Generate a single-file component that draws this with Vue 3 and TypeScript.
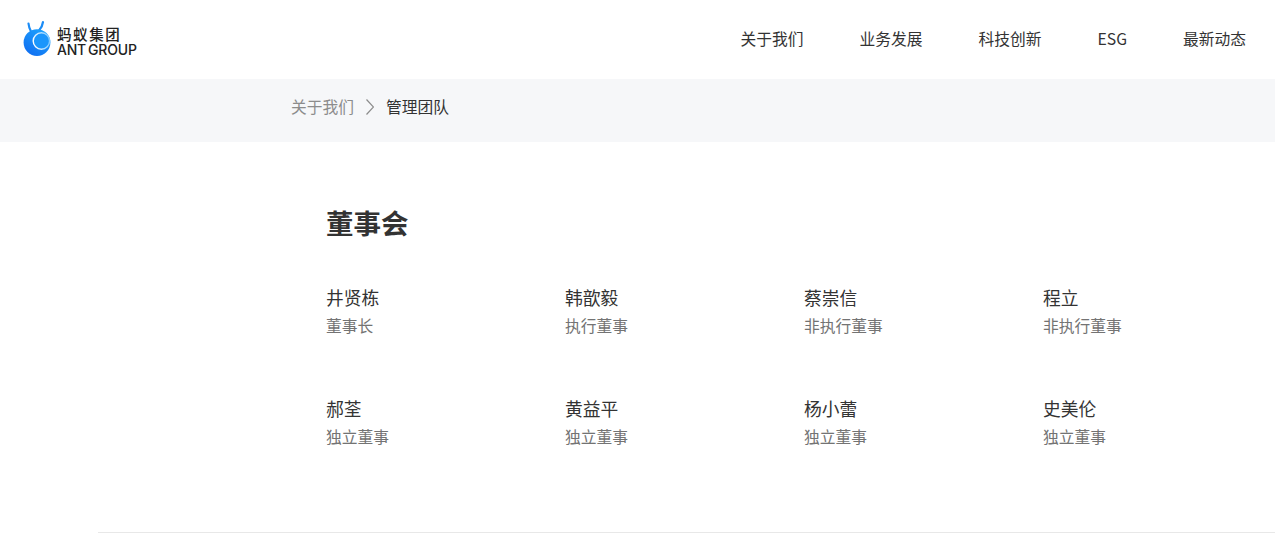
<template>
  <div class="page">
    <header class="header">
      <a class="logo" href="#" aria-label="蚂蚁集团">
        <svg class="logo__mark" width="28" height="36" viewBox="0 0 28 36" aria-hidden="true">
          <defs>
            <linearGradient id="antBody" x1="0.15" y1="1" x2="0.85" y2="0">
              <stop offset="0" stop-color="#0f6cf0" />
              <stop offset="1" stop-color="#1ea6ff" />
            </linearGradient>
            <linearGradient id="antRing" x1="0" y1="0.6" x2="1" y2="0.4">
              <stop offset="0" stop-color="#ffffff" />
              <stop offset="1" stop-color="#7cc8ff" />
            </linearGradient>
          </defs>
          <path d="M5.5 3.5C5.8 6.5 6.6 9 8 11.5" stroke="#1b8cf6" stroke-width="2.2" fill="none" stroke-linecap="round" />
          <path d="M20 2C19.6 5 18.4 8 16 10.5" stroke="#1b8cf6" stroke-width="2.2" fill="none" stroke-linecap="round" />
          <circle cx="14" cy="22.6" r="13.4" fill="url(#antBody)" />
          <circle cx="18.4" cy="21" r="8.2" fill="#1a96fc" stroke="url(#antRing)" stroke-width="1.4" />
        </svg>
        <span class="logo__text">
          <span class="logo__cn">蚂蚁集团</span>
          <span class="logo__en">ANT GROUP</span>
        </span>
      </a>
      <nav class="nav">
        <a v-for="item in navItems" :key="item" class="nav__item" href="#">{{ item }}</a>
      </nav>
    </header>

    <div class="crumbs">
      <a class="crumbs__link" href="#">关于我们</a>
      <svg class="crumbs__sep" width="8" height="16" viewBox="0 0 8 16" aria-hidden="true">
        <path d="M.5 .5l7 7.5-7 7.5" fill="none" stroke="#8c8c8c" stroke-width="1.2" />
      </svg>
      <span class="crumbs__current">管理团队</span>
    </div>

    <main class="board">
      <h1 class="board__title">董事会</h1>
      <ul class="board__grid" role="list">
        <li v-for="m in members" :key="m.name" class="member">
          <span class="member__name">{{ m.name }}</span>
          <span class="member__role">{{ m.role }}</span>
        </li>
      </ul>
    </main>

    <div class="rule" />
  </div>
</template>

<script setup lang="ts">
const navItems = ['关于我们', '业务发展', '科技创新', 'ESG', '最新动态']

const members = [
  { name: '井贤栋', role: '董事长' },
  { name: '韩歆毅', role: '执行董事' },
  { name: '蔡崇信', role: '非执行董事' },
  { name: '程立', role: '非执行董事' },
  { name: '郝荃', role: '独立董事' },
  { name: '黄益平', role: '独立董事' },
  { name: '杨小蕾', role: '独立董事' },
  { name: '史美伦', role: '独立董事' },
]
</script>

<style scoped>
.page {
  height: 545px;
  overflow: hidden;
  background: #fff;
  font-family: 'Noto Sans CJK SC', 'Noto Sans', sans-serif;
  color: #333;
}

.header {
  height: 79px;
  box-sizing: border-box;
  display: flex;
  align-items: center;
  justify-content: space-between;
  padding: 0 29px 3px 23px;
}

.logo {
  display: flex;
  align-items: flex-end;
  gap: 6px;
  text-decoration: none;
  color: #222;
}

.logo__text { display: flex; flex-direction: column; }
.logo__cn { font-size: 14.5px; line-height: 15px; font-weight: 500; letter-spacing: 1.6px; margin-bottom: 2px; }
.logo__en { font-family: Inter, 'Liberation Sans', sans-serif; font-size: 14px; line-height: 13px; font-weight: 500; letter-spacing: -0.2px; word-spacing: -1.5px; white-space: nowrap; }

.nav { display: flex; gap: 56px; margin-top: 2px; }
.nav__item { font-size: 15.75px; line-height: 24px; color: #333; text-decoration: none; }

.crumbs {
  height: 63px;
  box-sizing: border-box;
  display: flex;
  align-items: center;
  padding: 0 0 8px 291px;
  background: #f6f7f9;
  font-size: 15.75px;
}

.crumbs__link { color: #8c8c8c; text-decoration: none; }
.crumbs__sep { margin: 0 12px; }
.crumbs__current { color: #333; }

.board { padding: 59px 0 0 326px; }

.board__title {
  margin: 0 0 41px;
  font-size: 27.5px;
  line-height: 42px;
  font-weight: 700;
  color: #333;
}

.board__grid {
  list-style: none;
  margin: 0;
  padding: 0;
  display: grid;
  grid-template-columns: repeat(4, 239px);
  row-gap: 47px;
}

.member { display: flex; flex-direction: column; gap: 3px; height: 64px; }
.member__name { font-size: 17.75px; line-height: 27px; color: #333; }
.member__role { font-size: 15.75px; line-height: 24px; color: #737373; white-space: nowrap; }

.rule {
  margin: 73px 0 0 98px;
  border-top: 1px solid #e8e8e8;
}
</style>
